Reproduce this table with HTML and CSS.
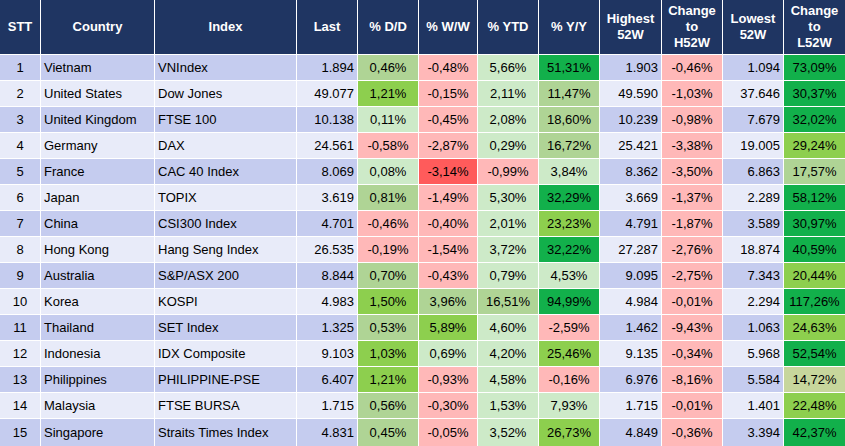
FILE: index.html
```html
<!DOCTYPE html>
<html>
<head>
<meta charset="utf-8">
<link rel="stylesheet" href="styles.css">
</head>
<body>
<div class="grid">
  <div class="h">STT</div><div class="h">Country</div><div class="h">Index</div><div class="h">Last</div><div class="h">% D/D</div><div class="h">% W/W</div><div class="h">% YTD</div><div class="h">% Y/Y</div><div class="h">Highest<br>52W</div><div class="h">Change<br>to<br>H52W</div><div class="h">Lowest<br>52W</div><div class="h">Change<br>to<br>L52W</div>

  <div class="c b">1</div><div class="l b">Vietnam</div><div class="l b">VNIndex</div><div class="r b">1.894</div><div class="c g2">0,46%</div><div class="c p">-0,48%</div><div class="c g1">5,66%</div><div class="c g4">51,31%</div><div class="r b">1.903</div><div class="c p">-0,46%</div><div class="r b">1.094</div><div class="c g4">73,09%</div>

  <div class="c w">2</div><div class="l w">United States</div><div class="l w">Dow Jones</div><div class="r w">49.077</div><div class="c g3">1,21%</div><div class="c p">-0,15%</div><div class="c g1">2,11%</div><div class="c g2">11,47%</div><div class="r w">49.590</div><div class="c p">-1,03%</div><div class="r w">37.646</div><div class="c g4">30,37%</div>

  <div class="c b">3</div><div class="l b">United Kingdom</div><div class="l b">FTSE 100</div><div class="r b">10.138</div><div class="c g1">0,11%</div><div class="c p">-0,45%</div><div class="c g1">2,08%</div><div class="c g2">18,60%</div><div class="r b">10.239</div><div class="c p">-0,98%</div><div class="r b">7.679</div><div class="c g4">32,02%</div>

  <div class="c w">4</div><div class="l w">Germany</div><div class="l w">DAX</div><div class="r w">24.561</div><div class="c p">-0,58%</div><div class="c p">-2,87%</div><div class="c g1">0,29%</div><div class="c g2">16,72%</div><div class="r w">25.421</div><div class="c p">-3,38%</div><div class="r w">19.005</div><div class="c g3">29,24%</div>

  <div class="c b">5</div><div class="l b">France</div><div class="l b">CAC 40 Index</div><div class="r b">8.069</div><div class="c g1">0,08%</div><div class="c red">-3,14%</div><div class="c p">-0,99%</div><div class="c g1">3,84%</div><div class="r b">8.362</div><div class="c p">-3,50%</div><div class="r b">6.863</div><div class="c g2">17,57%</div>

  <div class="c w">6</div><div class="l w">Japan</div><div class="l w">TOPIX</div><div class="r w">3.619</div><div class="c g2">0,81%</div><div class="c p">-1,49%</div><div class="c g1">5,30%</div><div class="c g4">32,29%</div><div class="r w">3.669</div><div class="c p">-1,37%</div><div class="r w">2.289</div><div class="c g4">58,12%</div>

  <div class="c b">7</div><div class="l b">China</div><div class="l b">CSI300 Index</div><div class="r b">4.701</div><div class="c p">-0,46%</div><div class="c p">-0,40%</div><div class="c g1">2,01%</div><div class="c g3">23,23%</div><div class="r b">4.791</div><div class="c p">-1,87%</div><div class="r b">3.589</div><div class="c g4">30,97%</div>

  <div class="c w">8</div><div class="l w">Hong Kong</div><div class="l w">Hang Seng Index</div><div class="r w">26.535</div><div class="c p">-0,19%</div><div class="c p">-1,54%</div><div class="c g1">3,72%</div><div class="c g4">32,22%</div><div class="r w">27.287</div><div class="c p">-2,76%</div><div class="r w">18.874</div><div class="c g4">40,59%</div>

  <div class="c b">9</div><div class="l b">Australia</div><div class="l b">S&amp;P/ASX 200</div><div class="r b">8.844</div><div class="c g2">0,70%</div><div class="c p">-0,43%</div><div class="c g1">0,79%</div><div class="c g1">4,53%</div><div class="r b">9.095</div><div class="c p">-2,75%</div><div class="r b">7.343</div><div class="c g3">20,44%</div>

  <div class="c w">10</div><div class="l w">Korea</div><div class="l w">KOSPI</div><div class="r w">4.983</div><div class="c g3">1,50%</div><div class="c g2">3,96%</div><div class="c g2">16,51%</div><div class="c g4">94,99%</div><div class="r w">4.984</div><div class="c p">-0,01%</div><div class="r w">2.294</div><div class="c g4">117,26%</div>

  <div class="c b">11</div><div class="l b">Thailand</div><div class="l b">SET Index</div><div class="r b">1.325</div><div class="c g2">0,53%</div><div class="c g3">5,89%</div><div class="c g1">4,60%</div><div class="c p">-2,59%</div><div class="r b">1.462</div><div class="c p">-9,43%</div><div class="r b">1.063</div><div class="c g3">24,63%</div>

  <div class="c w">12</div><div class="l w">Indonesia</div><div class="l w">IDX Composite</div><div class="r w">9.103</div><div class="c g3">1,03%</div><div class="c g1">0,69%</div><div class="c g1">4,20%</div><div class="c g3">25,46%</div><div class="r w">9.135</div><div class="c p">-0,34%</div><div class="r w">5.968</div><div class="c g4">52,54%</div>

  <div class="c b">13</div><div class="l b">Philippines</div><div class="l b">PHILIPPINE-PSE</div><div class="r b">6.407</div><div class="c g3">1,21%</div><div class="c p">-0,93%</div><div class="c g1">4,58%</div><div class="c p">-0,16%</div><div class="r b">6.976</div><div class="c p">-8,16%</div><div class="r b">5.584</div><div class="c ol">14,72%</div>

  <div class="c w">14</div><div class="l w">Malaysia</div><div class="l w">FTSE BURSA</div><div class="r w">1.715</div><div class="c g2">0,56%</div><div class="c p">-0,30%</div><div class="c g1">1,53%</div><div class="c g1">7,93%</div><div class="r w">1.715</div><div class="c p">-0,01%</div><div class="r w">1.401</div><div class="c g3">22,48%</div>

  <div class="c b">15</div><div class="l b">Singapore</div><div class="l b">Straits Times Index</div><div class="r b">4.831</div><div class="c g2">0,45%</div><div class="c p">-0,05%</div><div class="c g1">3,52%</div><div class="c g3">26,73%</div><div class="r b">4.849</div><div class="c p">-0,36%</div><div class="r b">3.394</div><div class="c g4">42,37%</div>
</div>
</body>
</html>
```

FILE: styles.css
```css
html, body {
  margin: 0;
  padding: 0;
  background: #ffffff;
}
body {
  font-family: "Liberation Sans", Arial, sans-serif;
  font-size: 13px;
  color: #000000;
}
.grid {
  display: grid;
  grid-template-columns: 40px 113px 141px 60px 60px 58px 60px 60px 61px 60px 60px 1fr;
  grid-template-rows: 54px repeat(14, 25px) 27px;
  gap: 1px;
  width: 845px;
  height: 446px;
  background: #ffffff;
}
.grid > div {
  display: flex;
  align-items: center;
  overflow: hidden;
  white-space: nowrap;
}
.h {
  background: #1f3562;
  color: #ffffff;
  font-weight: bold;
  justify-content: center;
  text-align: center;
  line-height: 16px;
}
.c { justify-content: center; }
.l { justify-content: flex-start; padding-left: 3px; }
.r { justify-content: flex-end; padding-right: 3px; }
.b { background: #c5ccef; }
.w { background: #e8ebf9; }
.g1 { background: #cdeac8; }
.g2 { background: #afd495; }
.g3 { background: #8dcf4e; }
.g4 { background: #12b04b; }
.ol { background: #c7d69c; }
.p { background: #ffb8b8; }
.red { background: #ff5b5b; }
```
